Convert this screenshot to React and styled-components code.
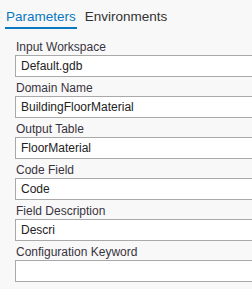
import React from 'react';
import styled, { createGlobalStyle } from 'styled-components';

const GlobalStyle = createGlobalStyle`
  html, body {
    margin: 0;
    padding: 0;
    background: #f8f8f8;
  }
  body {
    font-family: "Liberation Sans", Arial, sans-serif;
    overflow: hidden;
  }
`;

const Pane = styled.div`
  width: 252px;
  height: 289px;
  overflow: hidden;
  background: #f8f8f8;
`;

const TabBar = styled.div`
  display: flex;
  gap: 7px;
  padding-left: 5px;
`;

const Tab = styled.div`
  font-size: 13.5px;
  line-height: 17px;
  padding: 8px 1px 2px 1px;
  color: ${props => props.active ? '#0a79c2' : '#323232'};
  border-bottom: 2px solid ${props => props.active ? '#0a79c2' : 'transparent'};
`;

const Form = styled.div`
  display: flex;
  flex-direction: column;
  padding: 7px 0 0 15px;
`;

const Field = styled.div`
  display: flex;
  flex-direction: column;
`;

const FieldLabel = styled.label`
  font-size: 12px;
  line-height: 15px;
  padding: 4px 0 0 1px;
  color: #383340;
`;

const TextBox = styled.div`
  box-sizing: border-box;
  width: 260px;
  height: 22px;
  border: 1px solid #a9a9a9;
  background: #ffffff;
  padding: 0 5px;
  font-size: 12px;
  line-height: 20px;
  color: #222222;
  white-space: nowrap;
`;

const fields = [
  { label: 'Input Workspace', value: 'Default.gdb' },
  { label: 'Domain Name', value: 'BuildingFloorMaterial' },
  { label: 'Output Table', value: 'FloorMaterial' },
  { label: 'Code Field', value: 'Code' },
  { label: 'Field Description', value: 'Descri' },
  { label: 'Configuration Keyword', value: '' },
];

export default function App() {
  return (
    <Pane>
      <GlobalStyle />
      <TabBar>
        <Tab active>Parameters</Tab>
        <Tab>Environments</Tab>
      </TabBar>
      <Form>
        {fields.map(f => (
          <Field key={f.label}>
            <FieldLabel>{f.label}</FieldLabel>
            <TextBox>{f.value}</TextBox>
          </Field>
        ))}
      </Form>
    </Pane>
  );
}
